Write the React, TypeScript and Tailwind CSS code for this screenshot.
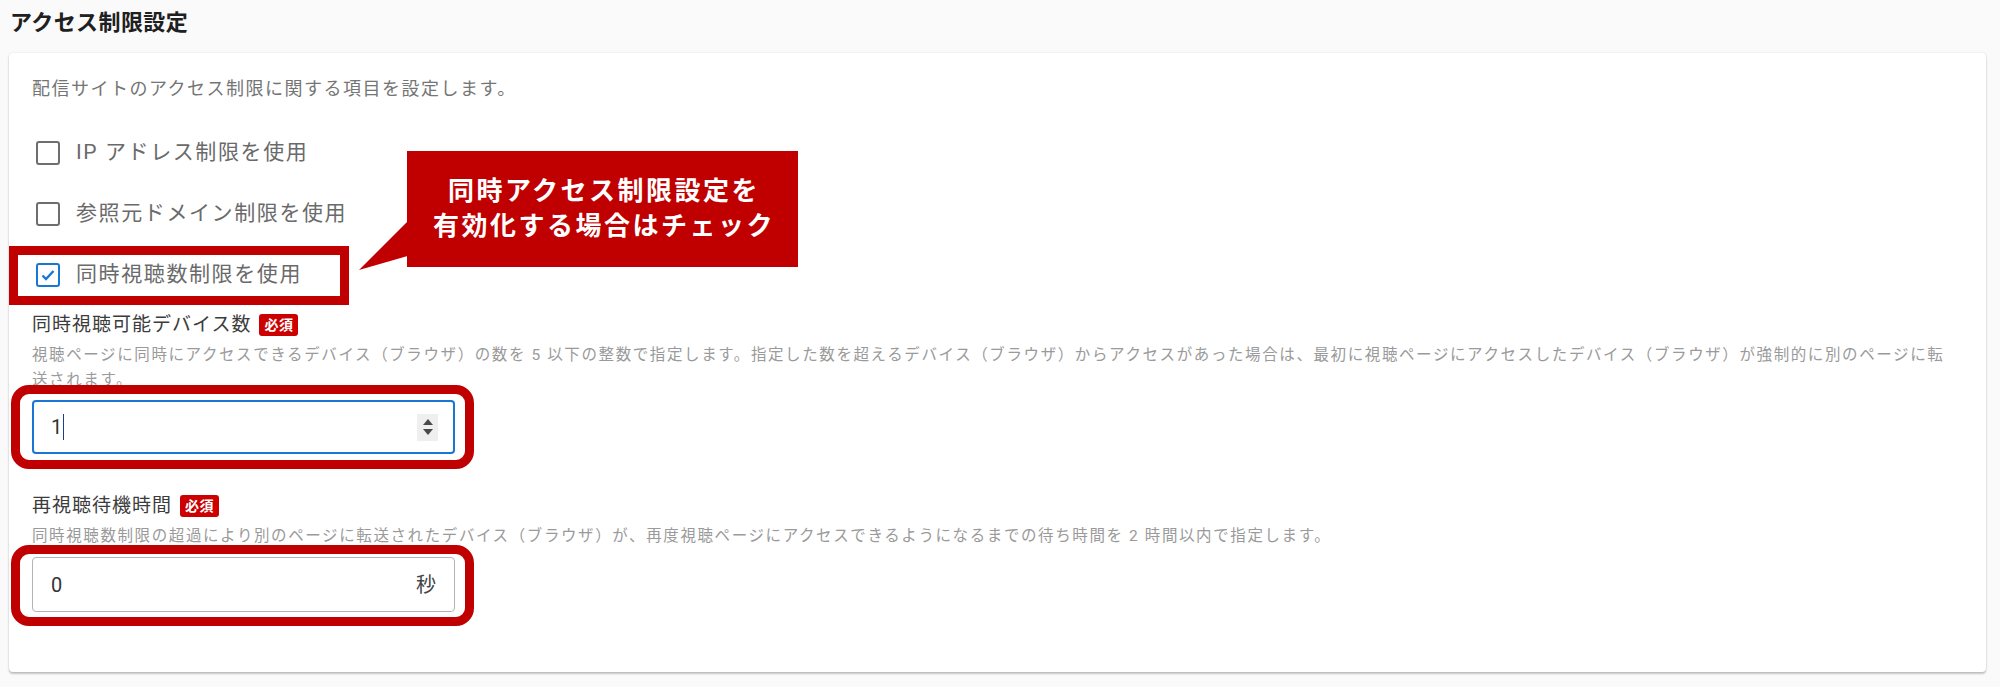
const font = "font-['Roboto','Noto_Sans_CJK_JP',sans-serif]";

function Checkbox({ checked, label }: { checked?: boolean; label: string }) {
  return (
    <div className="flex h-[61px] items-center">
      <span
        className={`ml-[4px] flex size-[24px] shrink-0 items-center justify-center rounded-[3px] border-[2.5px] bg-white ${
          checked ? "border-[#1976d2]" : "border-[#6e6e6e]"
        }`}
      >
        {checked && (
          <svg viewBox="0 0 16 16" className="size-[16px]" fill="none">
            <path d="M2.5 8.5l3.5 3.5 7.5-8" stroke="#1976d2" strokeWidth="2.4" />
          </svg>
        )}
      </span>
      <span className="ml-[16px] text-[21px] tracking-[1.6px] text-[#6a6a6a]">{label}</span>
    </div>
  );
}

function Required() {
  return (
    <span className="ml-[8px] inline-flex h-[22px] items-center rounded-[3px] bg-[#cc0000] px-[5px] text-[14px] font-bold leading-none tracking-[0.5px] text-white">
      必須
    </span>
  );
}

function FieldLabel({ children }: { children: string }) {
  return (
    <div className="flex h-[26px] items-center">
      <span className="text-[19px] tracking-[1px] text-[#3c3c3c]">{children}</span>
      <Required />
    </div>
  );
}

export default function App() {
  return (
    <div className={`min-h-screen w-full bg-[#fafafa] pl-[9px] pr-[14px] pt-[10px] ${font}`}>
      <h1 className="h-[26px] pl-px text-[22px] font-bold leading-[26px] tracking-[0.4px] text-[#202020]">
        アクセス制限設定
      </h1>

      <div className="relative mt-[17px] rounded-[4px] bg-white pb-[60px] pl-[23px] pr-[31px] pt-[24px] shadow-[0_2px_2px_rgba(0,0,0,0.22),0_0_2px_rgba(0,0,0,0.12)]">
        <p className="text-[18px] leading-[24px] tracking-[1.5px] text-[#757575]">
          配信サイトのアクセス制限に関する項目を設定します。
        </p>

        <div className="mt-[21px]">
          <Checkbox label="IP アドレス制限を使用" />
          <Checkbox label="参照元ドメイン制限を使用" />
          <Checkbox checked label="同時視聴数制限を使用" />
        </div>

        <div className="mt-[7px]">
          <FieldLabel>同時視聴可能デバイス数</FieldLabel>
          <p className="mt-[5px] text-[15.5px] leading-[25px] tracking-[1.6px] text-[#9a9a9a]">
            視聴ページに同時にアクセスできるデバイス（ブラウザ）の数を 5 以下の整数で指定します。指定した数を超えるデバイス（ブラウザ）からアクセスがあった場合は、最初に視聴ページにアクセスしたデバイス（ブラウザ）が強制的に別のページに転送されます。
          </p>
          <div className="mt-[7px] flex h-[54px] w-[423px] items-center rounded-[4px] border-2 border-[#1976d2] pl-[17px] pr-[15px]">
            <span className="text-[20px] text-[#333]">1</span>
            <span className="ml-px h-[26px] w-px bg-[#1d3f8a]" />
            <span className="ml-auto flex h-[27px] w-[21px] flex-col items-center justify-center gap-[4px] bg-[#efefef]">
              <svg viewBox="0 0 10 6" className="h-[6px] w-[10px]">
                <path d="M5 0L10 6H0z" fill="#4a4a4a" />
              </svg>
              <svg viewBox="0 0 10 6" className="h-[6px] w-[10px]">
                <path d="M0 0h10L5 6z" fill="#4a4a4a" />
              </svg>
            </span>
          </div>
        </div>

        <div className="mt-[39px]">
          <FieldLabel>再視聴待機時間</FieldLabel>
          <p className="mt-[5px] text-[15.5px] leading-[25px] tracking-[1.6px] text-[#9a9a9a]">
            同時視聴数制限の超過により別のページに転送されたデバイス（ブラウザ）が、再度視聴ページにアクセスできるようになるまでの待ち時間を 2 時間以内で指定します。
          </p>
          <div className="mt-[8px] flex h-[55px] w-[423px] items-center rounded-[4px] border-[1.5px] border-[#b4b4b4] pl-[18px] pr-[18px]">
            <span className="text-[20px] text-[#333]">0</span>
            <span className="ml-auto text-[20px] text-[#444]">秒</span>
          </div>
        </div>

        {/* annotations */}
        <div className="absolute left-0 top-[193px] h-[59px] w-[340px] border-[9px] border-[#c00000]" />
        <div className="absolute left-[2px] top-[332px] h-[84px] w-[463px] rounded-[18px] border-[9px] border-[#c00000]" />
        <div className="absolute left-[2px] top-[492px] h-[81px] w-[463px] rounded-[18px] border-[9px] border-[#c00000]" />

        <svg className="absolute left-[348px] top-[163px] h-[56px] w-[54px]" viewBox="0 0 54 56">
          <path d="M54 2L54 39L2 54z" fill="#c00000" />
        </svg>
        <div className="absolute left-[398px] top-[98px] flex h-[116px] w-[391px] flex-col items-center justify-center bg-[#c00000] pl-[3px] text-[26px] font-bold leading-[35px] tracking-[2.5px] text-white">
          <span>同時アクセス制限設定を</span>
          <span>有効化する場合はチェック</span>
        </div>
      </div>
    </div>
  );
}
